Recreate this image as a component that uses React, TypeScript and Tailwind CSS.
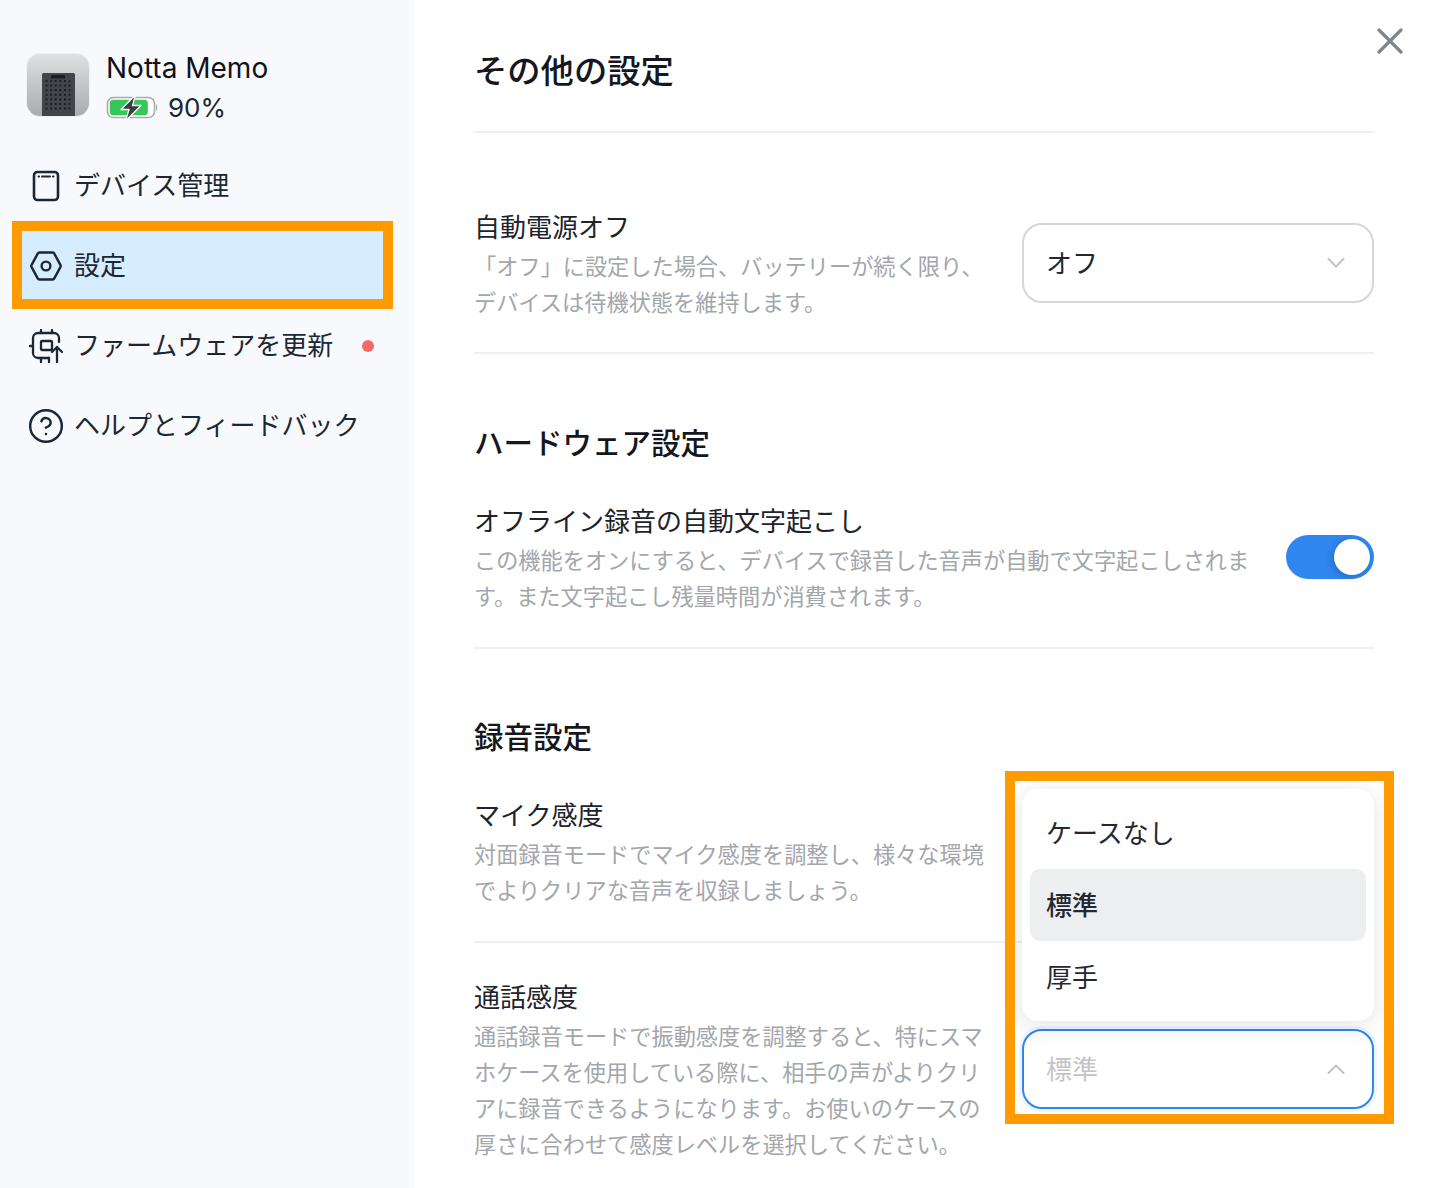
import { CircleHelp } from 'lucide-react';
import type { ReactNode } from 'react';

const FONT = "font-['Inter','Noto_Sans_CJK_JP',sans-serif]";

function DeviceThumb() {
  const dots = [];
  for (let row = 0; row < 7; row++) {
    for (let col = 0; col < 6; col++) {
      dots.push(<circle key={`${row}-${col}`} cx={20.5 + col * 4.6} cy={28 + row * 4.6} r="1.1" fill="#1a1c1f" />);
    }
  }
  return (
    <svg width="64" height="64" viewBox="0 0 64 64" className="shrink-0">
      <defs>
        <linearGradient id="tile" x1="0" y1="0" x2="0" y2="1">
          <stop offset="0" stopColor="#dfe0e2" />
          <stop offset="1" stopColor="#a9abae" />
        </linearGradient>
        <clipPath id="tile-clip">
          <rect x="1" y="1" width="62" height="62" rx="13" />
        </clipPath>
      </defs>
      <rect x="0" y="0" width="64" height="64" rx="14" fill="#eef0f3" />
      <g clipPath="url(#tile-clip)">
        <rect x="1" y="1" width="62" height="62" fill="url(#tile)" />
        <rect x="16" y="20" width="33" height="46" rx="1.5" fill="#43454a" />
        <rect x="25" y="22" width="14" height="3.5" fill="#1d1f22" />
        {dots}
      </g>
    </svg>
  );
}

function BatteryIcon() {
  return (
    <svg width="52" height="28" viewBox="0 0 52 28" className="shrink-0">
      <rect x="1.5" y="3.5" width="47" height="20" rx="6" fill="#fff" stroke="#a9abae" strokeWidth="1.6" />
      <rect x="3.8" y="5.8" width="38" height="15.4" rx="3.5" fill="#37c759" />
      <path d="M50 10c1.5.7 1.5 6.3 0 7z" fill="#a9abae" />
      <path d="M29.5 1 15 15.5h8L19.5 27 35 11.5h-8.5z" fill="#3b3d42" stroke="#fff" strokeWidth="1.3" strokeLinejoin="round" />
    </svg>
  );
}

function TabletIcon() {
  return (
    <svg width="28" height="32" viewBox="0 0 28 32" fill="none" stroke="#1c2734" strokeWidth="2.6">
      <rect x="2" y="2" width="24" height="28" rx="3.5" />
      <path d="M10 6.5h8M6.5 6.5h.6M20.9 6.5h.6" strokeWidth="2" strokeLinecap="round" />
    </svg>
  );
}

function HexIcon() {
  return (
    <svg width="34" height="32" viewBox="0 0 34 32" fill="none" stroke="#1c2734" strokeWidth="2.4" strokeLinejoin="round">
      <path d="M10.5 2.5h13a2 2 0 0 1 1.8 1.1l6.2 11.5a2 2 0 0 1 0 1.8l-6.2 11.5a2 2 0 0 1-1.8 1.1h-13a2 2 0 0 1-1.8-1.1L2.5 16.9a2 2 0 0 1 0-1.8L8.7 3.6a2 2 0 0 1 1.8-1.1z" />
      <circle cx="17" cy="16" r="4.4" />
    </svg>
  );
}

function FirmwareIcon() {
  return (
    <svg width="34" height="34" viewBox="0 0 34 34" fill="none" stroke="#1c2734" strokeWidth="2.3" strokeLinecap="round" strokeLinejoin="round">
      <path d="M30 13V9a5 5 0 0 0-5-5H9a5 5 0 0 0-5 5v15a5 5 0 0 0 5 5h11" />
      <path d="M12 1v3M23 1v3M1 17h3M12 29v4M20 29v4" />
      <rect x="12" y="12" width="11" height="9" rx="1" />
      <path d="M28 33V18M23 23l5-5 5 5" />
    </svg>
  );
}

function Chevron({ up }: { up?: boolean }) {
  return (
    <svg width="18" height="12" viewBox="0 0 18 12" fill="none" stroke="#c2c2c2" strokeWidth="2" strokeLinecap="round" strokeLinejoin="round">
      <path d={up ? 'M1.5 10 9 2.5l7.5 7.5' : 'M1.5 2 9 9.5 16.5 2'} />
    </svg>
  );
}

function NavItem({ icon, label, active, dot }: { icon: ReactNode; label: string; active?: boolean; dot?: boolean }) {
  return (
    <div
      className={`flex h-[68px] items-center pl-[7px] pr-[9px] pt-[2px] ${
        active ? 'bg-[#d5edff] outline-[10px] outline-[#ff9b00]' : ''
      }`}
    >
      <span className="flex w-[34px] justify-center">{icon}</span>
      <span className="ml-[11px] text-[26px] leading-9 text-[#1c2734]">{label}</span>
      {dot ? <span className="ml-auto size-3 rounded-full bg-[#f36b66]" /> : null}
    </div>
  );
}

function Sidebar() {
  return (
    <aside className="h-full w-[414px] shrink-0 bg-[#f8f9fc]">
      <div className="flex items-start pl-[26px] pt-[53px]">
        <DeviceThumb />
        <div className="ml-[16px]">
          <div className="text-[28px] leading-[30px] text-[#10131a]">Notta Memo</div>
          <div className="mt-[8px] flex items-center gap-[10px]">
            <BatteryIcon />
            <span className="text-[26px] leading-[34px] text-[#1c2734]">90%</span>
          </div>
        </div>
      </div>
      <nav className="mt-[26px] flex flex-col gap-3 pl-[22px] pr-[31px]">
        <NavItem icon={<TabletIcon />} label="デバイス管理" />
        <NavItem icon={<HexIcon />} label="設定" active />
        <NavItem icon={<FirmwareIcon />} label="ファームウェアを更新" dot />
        <NavItem
          icon={<CircleHelp size={38} strokeWidth={1.55} color="#1c2734" className="shrink-0" />}
          label="ヘルプとフィードバック"
        />
      </nav>
    </aside>
  );
}

function Select({ value, open }: { value: string; open?: boolean }) {
  return (
    <div
      className={`flex h-[80px] w-[352px] items-center justify-between rounded-[20px] border-2 bg-white pl-[22px] pr-[27px] text-[26px] ${
        open ? 'border-[#2e86ee] text-[#c4c4c4] shadow-[0_0_0_3px_#edf5fe]' : 'border-[#d6d6d6] text-[#25282e]'
      }`}
    >
      <span>{value}</span>
      <Chevron up={open} />
    </div>
  );
}

function Toggle() {
  return (
    <div className="flex h-[44px] w-[88px] items-center justify-end rounded-full bg-[#2e86ee] pr-[4px]">
      <div className="size-9 rounded-full bg-white shadow-[-2px_2px_6px_rgba(0,0,0,0.18)]" />
    </div>
  );
}

function Row({ label, desc, width, control, controlTop }: { label: string; desc: string; width: string; control: ReactNode; controlTop: string }) {
  return (
    <div className="flex items-start justify-between">
      <div className={width}>
        <div className="text-[26px] leading-9 text-[#20232a]">{label}</div>
        <p className="mt-[3px] text-[22.2px] leading-9 text-[#a3a6ab]">{desc}</p>
      </div>
      <div className={controlTop}>{control}</div>
    </div>
  );
}

function Divider() {
  return <div className="h-[2px] bg-[#f0f0f1]" />;
}

function SectionTitle({ children }: { children: ReactNode }) {
  return <h2 className="text-[29.5px] font-medium leading-[44px] text-[#14171d]">{children}</h2>;
}

function CaseDropdown() {
  return (
    <div className="relative">
      <div className="absolute bottom-[calc(100%+8px)] left-0 z-10 w-[352px] rounded-[16px] bg-white p-2 text-[26px] text-[#25282e] shadow-[0_4px_24px_rgba(30,40,60,0.13)]">
        <div className="flex h-[72px] items-center px-[16px]">ケースなし</div>
        <div className="flex h-[72px] items-center rounded-[10px] bg-[#edeef0] px-[16px] font-medium">標準</div>
        <div className="flex h-[72px] items-center px-[16px]">厚手</div>
      </div>
      <Select value="標準" open />
      <div className="pointer-events-none absolute -bottom-[15px] -left-[17px] -right-[20px] -top-[258px] z-20 border-[10px] border-[#ff9b00]" />
    </div>
  );
}

function Content() {
  return (
    <main className="relative h-full min-w-0 flex-1 pl-[60px] pr-[55px]">
      <button type="button" className="absolute right-[26px] top-[28px]" aria-label="close">
        <svg width="26" height="26" viewBox="0 0 26 26" fill="none" stroke="#7f868f" strokeWidth="3.2" strokeLinecap="round">
          <path d="M2 2l22 22M24 2 2 24" />
        </svg>
      </button>
      <h1 className="pt-[48px] text-[33.3px] font-medium leading-[46px] text-[#14171d]">その他の設定</h1>
      <div className="mt-[37px]">
        <Divider />
      </div>
      <div className="pt-[77px] pb-[31px]">
        <Row
          label="自動電源オフ"
          desc="「オフ」に設定した場合、バッテリーが続く限り、デバイスは待機状態を維持します。"
          width="w-[512px]"
          controlTop="mt-[13px]"
          control={<Select value="オフ" />}
        />
      </div>
      <Divider />
      <div className="pt-[67px] pb-[32px]">
        <SectionTitle>ハードウェア設定</SectionTitle>
        <div className="mt-[39px]">
          <Row
            label="オフライン録音の自動文字起こし"
            desc="この機能をオンにすると、デバイスで録音した音声が自動で文字起こしされます。また文字起こし残量時間が消費されます。"
            width="w-[780px]"
            controlTop="mt-[31px]"
            control={<Toggle />}
          />
        </div>
      </div>
      <Divider />
      <div className="pt-[66px] pb-[32px]">
        <SectionTitle>録音設定</SectionTitle>
        <div className="mt-[39px]">
          <Row
            label="マイク感度"
            desc="対面録音モードでマイク感度を調整し、様々な環境でよりクリアな音声を収録しましょう。"
            width="w-[512px]"
            controlTop=""
            control={null}
          />
        </div>
      </div>
      <Divider />
      <div className="pt-[37px]">
        <Row
          label="通話感度"
          desc="通話録音モードで振動感度を調整すると、特にスマホケースを使用している際に、相手の声がよりクリアに録音できるようになります。お使いのケースの厚さに合わせて感度レベルを選択してください。"
          width="w-[512px]"
          controlTop="mt-[49px]"
          control={<CaseDropdown />}
        />
      </div>
    </main>
  );
}

export default function App() {
  return (
    <div className={`flex h-[1188px] w-full overflow-hidden bg-white ${FONT}`}>
      <Sidebar />
      <Content />
    </div>
  );
}
